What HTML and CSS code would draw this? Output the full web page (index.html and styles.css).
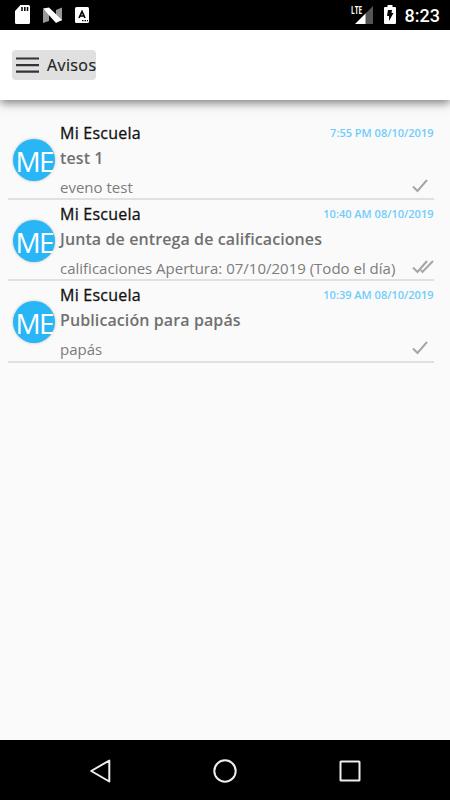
FILE: index.html
```html
<!DOCTYPE html>
<html lang="es">
<head>
<meta charset="utf-8">
<title>Avisos</title>
<link rel="stylesheet" href="styles.css">
</head>
<body>
<header class="status">
  <div class="status-left">
    <svg width="15" height="20" viewBox="0 0 15 20"><path fill="#fff" d="M5.500 0H13.500Q15 0 15 1.500V17.500Q15 19 13.500 19H1.500Q0 19 0 17.500V6Z"/><path stroke="#000" stroke-width="1.500" d="M7 2V6M9.800 2V6M12.500 2V6"/></svg>
    <svg width="19" height="17" viewBox="0 0 19 17"><path fill="#999" d="M0 2L6 7V14L0 16ZM19 .5V14L13 10V3Z"/><path fill="#fff" d="M0 1.500L6 .5L19 13L13 16Z"/></svg>
    <svg width="14" height="16" viewBox="0 0 14 16"><rect width="14" height="16" rx="1.500" fill="#fff"/><path d="M4 11L7 4.500L10 11M5 9H9" fill="none" stroke="#000" stroke-width="1.600"/><path d="M7 13.600H8.500M9.500 13.600H11M12 13.600H13" stroke="#000" stroke-width="1.300"/></svg>
  </div>
  <div class="status-right">
    <span class="lte">LTE</span>
    <svg class="signal" width="18" height="18" viewBox="0 0 18 18"><path fill="#555" d="M10 8L18 0V18H10Z"/><path fill="#fff" d="M0 18L10.500 7.500V18Z"/></svg>
    <svg class="battery" width="12" height="19" viewBox="0 0 12 19"><path fill="#fff" d="M3.500 0H8.500V2H11Q12 2 12 3V18Q12 19 11 19H1Q0 19 0 18V3Q0 2 1 2H3.500Z"/><path d="M4 5H8L7.500 8H9.500L5 16V11H3Z"/></svg>
    <span class="clock">8:23</span>
  </div>
</header>
<div class="toolbar">
  <div class="menu">
    <svg width="23" height="16" viewBox="0 0 23 16"><path d="M0 1.500H23M0 8.200H23M0 14.700H23" stroke="#333" stroke-width="2.200"/></svg>
    <span class="menu-label">Avisos</span>
  </div>
</div>
<main class="list">
  <article class="notice">
    <div class="avatar"><span>ME</span></div>
    <div class="content">
      <div class="top"><span class="name">Mi Escuela</span><time class="date">7:55 PM 08/10/2019</time></div>
      <div class="title">test 1</div>
      <div class="bottom"><span class="text">eveno test</span>
      <svg class="check" width="22" height="16" viewBox="0 0 22 16"><path d="M1 8.500L5.500 13L15 2"/></svg></div>
    </div>
  </article>
  <article class="notice">
    <div class="avatar"><span>ME</span></div>
    <div class="content">
      <div class="top"><span class="name">Mi Escuela</span><time class="date">10:40 AM 08/10/2019</time></div>
      <div class="title">Junta de entrega de calificaciones</div>
      <div class="bottom"><span class="text">calificaciones Apertura: 07/10/2019 (Todo el día)</span>
      <svg class="check" width="22" height="16" viewBox="0 0 22 16"><path d="M1 8.500L5.500 13L15 2M9 11L10.500 13L21 2"/></svg></div>
    </div>
  </article>
  <article class="notice">
    <div class="avatar"><span>ME</span></div>
    <div class="content">
      <div class="top"><span class="name">Mi Escuela</span><time class="date">10:39 AM 08/10/2019</time></div>
      <div class="title">Publicación para papás</div>
      <div class="bottom"><span class="text">papás</span>
      <svg class="check" width="22" height="16" viewBox="0 0 22 16"><path d="M1 8.500L5.500 13L15 2"/></svg></div>
    </div>
  </article>
</main>
<nav class="navbar">
  <svg width="22" height="24" viewBox="0 0 22 24"><path d="M19.300 1.500V22.500L1.200 12Z"/></svg>
  <svg width="24" height="24" viewBox="0 0 24 24"><circle cx="12" cy="12" r="10.700"/></svg>
  <svg width="22" height="22" viewBox="0 0 22 22"><rect x="1.500" y="1.500" width="19" height="19" rx=".5"/></svg>
</nav>
</body>
</html>
```

FILE: styles.css
```css
* { box-sizing: border-box; }
body {
  margin: 0;
  height: 800px;
  display: flex;
  flex-direction: column;
  overflow: hidden;
  background: #fafafa;
  font-family: "Open Sans", sans-serif;
}
svg { display: block; flex: none; }
.status {
  height: 30px;
  flex: none;
  display: flex;
  justify-content: space-between;
  background: #000;
  color: #fff;
}
.status-left { display: flex; align-items: center; gap: 13px; padding-left: 15px; }
.status-right { display: flex; align-items: flex-start; padding-right: 10px; }
.lte { font: 700 10px/10px "Open Sans", sans-serif; width: 11px; margin: 5px -7px 0 0; transform: scaleX(.65); transform-origin: left; }
.signal { margin: 6px 11px 0 0; }
.battery { margin: 5px 9px 0 0; }
.clock { font: 500 18px/31px Roboto, sans-serif; white-space: nowrap; }
.toolbar {
  height: 70px;
  flex: none;
  display: flex;
  padding: 20px 12px;
  background: #fff;
  box-shadow: 0 3px 9px rgba(0, 0, 0, .5);
}
.menu {
  display: flex;
  align-items: center;
  gap: 8px;
  width: 84px;
  height: 30px;
  padding-left: 4px;
  border-radius: 4px;
  background: #e0e0e0;
}
.menu-label { font-size: 16px; line-height: 28px; letter-spacing: .4px; color: #222; -webkit-text-stroke: .2px #222; }
.list { flex: 1; padding: 19px 16.500px 0 8px; }
.notice {
  height: 81.200px;
  display: flex;
  padding-left: 5px;
  border-bottom: 2px solid #e0e0e0;
}
.avatar {
  width: 42px;
  height: 42px;
  flex: none;
  display: flex;
  justify-content: center;
  align-items: center;
  margin: 19.500px 5px 0 .3px;
  border-radius: 50%;
  background: #29b6f6;
  box-shadow: 0 0 3px rgba(0, 0, 0, .25);
  color: #fff;
  font-size: 28px;
  letter-spacing: -1.500px;
}
.avatar span { padding-top: 3px; }
.content { flex: 1; min-width: 0; margin-left: -.3px; white-space: nowrap; }
.top { display: flex; justify-content: space-between; height: 27px; line-height: 28px; }
.name { font-size: 16px; letter-spacing: .25px; color: #111; -webkit-text-stroke: .3px #111; }
.date { font-size: 11px; font-weight: 600; line-height: 27px; color: #70cdfa; }
.title { height: 24px; font-size: 16px; font-weight: 600; line-height: 24px; letter-spacing: .1px; color: #707070; }
.bottom { display: flex; justify-content: space-between; height: 27px; line-height: 34px; }
.text { font-size: 15px; color: #7c7c7c; }
.check { margin-top: 8px; fill: none; stroke: #a3a6a8; stroke-width: 2; }
.navbar {
  height: 60px;
  flex: none;
  display: flex;
  justify-content: space-between;
  align-items: center;
  padding: 1px 89px 0 89.500px;
  background: #000;
}
.navbar svg { fill: none; stroke: #eee; stroke-width: 2; stroke-linejoin: round; }
```
